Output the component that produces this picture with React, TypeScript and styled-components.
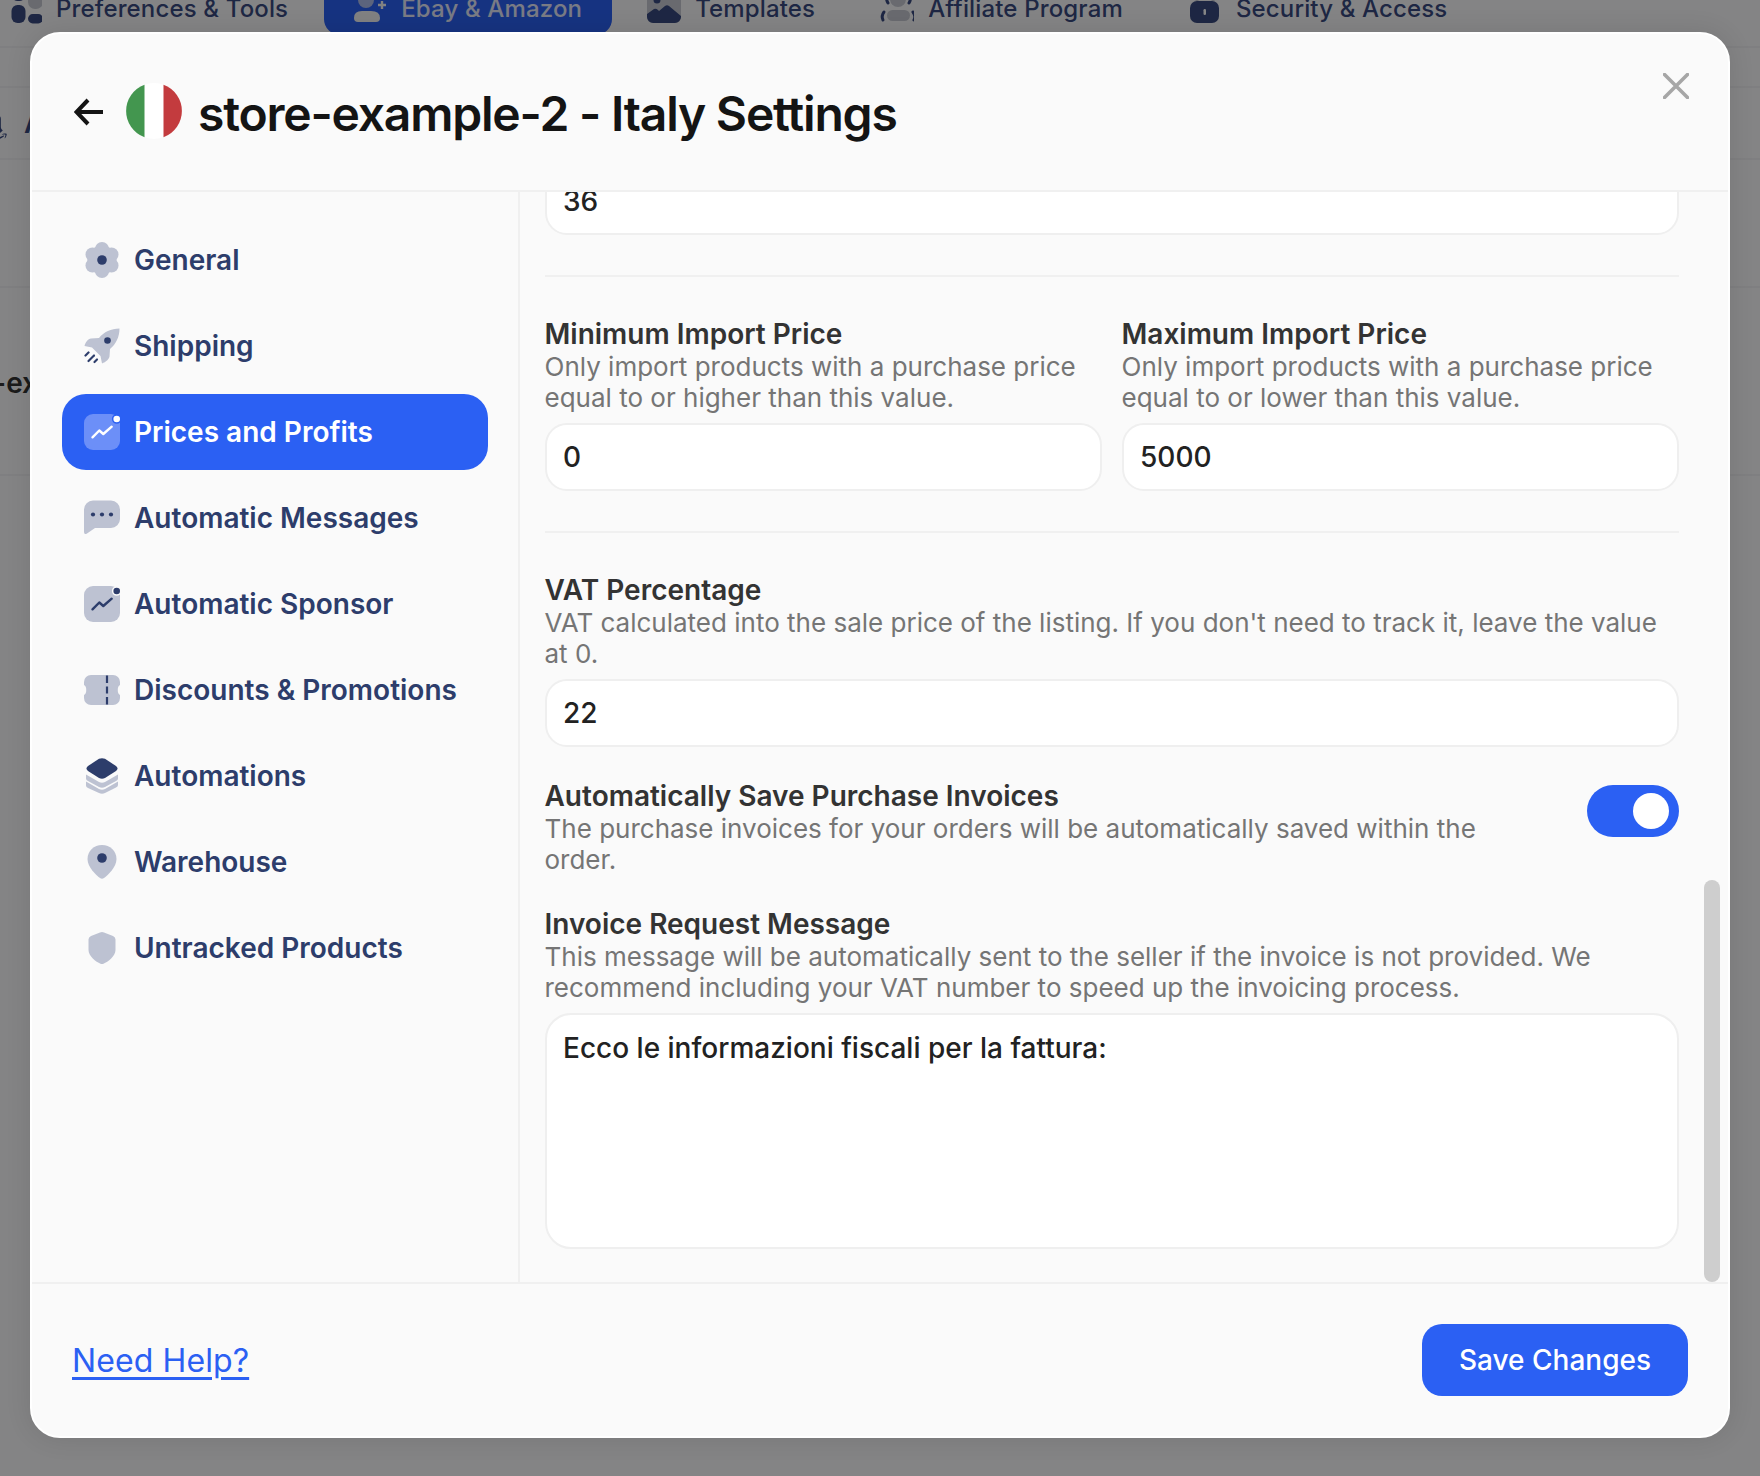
import React from "react";
import styled, { createGlobalStyle } from "styled-components";
import { FaAmazon } from "react-icons/fa";

const Global = createGlobalStyle`
  * { box-sizing: border-box; }
  html, body { margin: 0; padding: 0; background: #fafafc; }
  body { font-family: Inter, "Liberation Sans", sans-serif; }
  #root { width: 1760px; height: 1476px; overflow: hidden; }
`;

const Page = styled.div`
  position: relative;
  width: 1760px;
  height: 1476px;
  overflow: hidden;
  background: #fafafc;
`;

const TabBar = styled.div`
  display: flex;
  gap: 6px;
  height: 48px;
  margin-left: -21px;
  border-bottom: 2px solid #f0f0f3;
`;

const Tab = styled.div<{ $active?: boolean }>`
  display: flex;
  flex: none;
  align-items: center;
  gap: 14px;
  height: 54px;
  margin-top: -19px;
  padding: 0 30px 0 27px;
  border-radius: 16px;
  font-size: 24px;
  font-weight: 500;
  letter-spacing: 0.15px;
  white-space: nowrap;
  color: ${(p) => (p.$active ? "#e4e9fb" : "#3a4b80")};
  background: ${(p) => (p.$active ? "#2b60f3" : "transparent")};
`;

const BgRow = styled.div<{ $h: number; $shift?: number }>`
  display: flex;
  align-items: center;
  height: ${(p) => p.$h}px;
  padding-top: ${(p) => p.$shift ?? 0}px;
  border-bottom: 2px solid #f0f0f3;
  font-size: 28px;
  white-space: nowrap;
`;

const MarketIcon = styled(FaAmazon)`
  flex: none;
  width: 30px;
  height: 30px;
  margin-left: -21px;
  margin-top: 8px;
  color: #3a4b80;
`;

const MarketName = styled.span`
  margin-left: 15px;
  font-weight: 600;
  color: #3a4b80;
`;

const StoreName = styled.span`
  margin-left: -76px;
  font-weight: 600;
  color: #333;
`;

const Overlay = styled.div`
  position: absolute;
  inset: 0;
  background: rgba(0, 0, 0, 0.47);
`;

const Modal = styled.div`
  position: absolute;
  top: 32px;
  left: 30px;
  display: flex;
  flex-direction: column;
  width: 1700px;
  height: 1406px;
  overflow: hidden;
  border: 2px solid #fff;
  border-radius: 30px;
  background: #fafafa;
  box-shadow: 0 0 26px rgba(0, 0, 0, 0.1);
`;

const Header = styled.header`
  position: relative;
  display: flex;
  flex: none;
  align-items: center;
  gap: 16px;
  height: 158px;
  padding: 0 0 0 42px;
  border-bottom: 2px solid #f0f0f0;
`;

const BackIcon = styled.svg`
  flex: none;
  width: 30px;
  height: 28px;
  margin-right: 6px;
`;

const Flag = styled.svg`
  flex: none;
  width: 56px;
  height: 56px;
  margin-top: -2px;
`;

const Title = styled.h1`
  margin: 2px 0 0;
  font-size: 48px;
  font-weight: 600;
  letter-spacing: -1.2px;
  color: #141414;
  white-space: nowrap;
`;

const CloseIcon = styled.svg`
  position: absolute;
  top: 39px;
  right: 39px;
  width: 26px;
  height: 26px;
`;

const Body = styled.div`
  position: relative;
  display: flex;
  flex: 1;
  min-height: 0;
`;

const Sidebar = styled.nav`
  display: flex;
  flex: none;
  flex-direction: column;
  gap: 10px;
  width: 488px;
  padding: 30px 30px 0;
  border-right: 2px solid #f0f0f0;
`;

const NavRow = styled.div<{ $active?: boolean }>`
  --soft: ${(p) => (p.$active ? "#6c8ff8" : "#bdc2d2")};
  --strong: ${(p) => (p.$active ? "#ffffff" : "#2d3d6b")};
  --under: ${(p) => (p.$active ? "#2b60f3" : "#fafafa")};
  display: flex;
  flex: none;
  align-items: center;
  gap: 14px;
  height: 76px;
  padding-left: 22px;
  border-radius: 24px;
  font-size: 28px;
  font-weight: 600;
  color: ${(p) => (p.$active ? "#fff" : "#2d3d6b")};
  background: ${(p) => (p.$active ? "#2b60f3" : "transparent")};
`;

const Glyph = styled.svg`
  flex: none;
  width: 36px;
  height: 36px;
`;

const Content = styled.main`
  flex: 1;
  min-width: 0;
  overflow: hidden;
  padding: 0 49px 0 25px;
`;

const Scroller = styled.div`
  display: flex;
  flex-direction: column;
  margin-top: -25px;
`;

const Rule = styled.hr`
  flex: none;
  width: 100%;
  height: 2px;
  margin: 40px 0 39px;
  border: 0;
  background: #f0f0f0;
`;

const Columns = styled.div`
  display: grid;
  grid-template-columns: 1fr 1fr;
  gap: 20px;
`;

const Field = styled.div<{ $top?: number }>`
  display: flex;
  flex-direction: column;
  min-width: 0;
  margin-top: ${(p) => p.$top ?? 0}px;
`;

const Label = styled.div`
  margin-left: -0.5px;
  font-size: 28px;
  font-weight: 600;
  line-height: 36px;
  color: #333;
`;

const Hint = styled.div`
  margin: -1px 0 1px -0.5px;
  font-size: 26px;
  font-weight: 400;
  line-height: 31px;
  color: #757575;
`;

const Input = styled.input`
  display: block;
  width: 100%;
  height: 68px;
  margin-top: 9px;
  padding: 0 16px;
  border: 2px solid #efefef;
  border-radius: 22px;
  outline: 0;
  background: #fff;
  font-family: inherit;
  font-size: 28px;
  font-weight: 500;
  color: #222;
`;

const FirstInput = styled(Input)`
  margin-top: 0;
`;

const TextArea = styled.textarea`
  display: block;
  width: 100%;
  height: 236px;
  margin-top: 9px;
  padding: 15px 16px;
  border: 2px solid #efefef;
  border-radius: 26px;
  outline: 0;
  resize: none;
  background: #fff;
  font-family: inherit;
  font-size: 28px;
  font-weight: 500;
  line-height: 36px;
  color: #222;
`;

const ToggleRow = styled.div`
  display: flex;
  align-items: flex-start;
  justify-content: space-between;
  gap: 60px;
  margin-top: 31px;
`;

const ToggleText = styled.div`
  flex: 1;
  min-width: 0;
`;

const Toggle = styled.div`
  display: flex;
  flex: none;
  align-items: center;
  justify-content: flex-end;
  width: 92px;
  height: 52px;
  margin-top: 7px;
  padding-right: 10px;
  border-radius: 26px;
  background: #2b60f3;
`;

const Knob = styled.span`
  display: block;
  width: 36px;
  height: 36px;
  border-radius: 50%;
  background: #fff;
`;

const Thumb = styled.div`
  position: absolute;
  top: 688px;
  right: 8px;
  width: 16px;
  height: 402px;
  border-radius: 8px;
  background: #cecece;
`;

const Footer = styled.footer`
  display: flex;
  flex: none;
  align-items: center;
  justify-content: space-between;
  height: 154px;
  padding: 0 40px 0 40px;
  border-top: 2px solid #f0f0f0;
`;

const Help = styled.a`
  font-size: 32px;
  font-weight: 400;
  letter-spacing: 0.1px;
  color: #2b60f3;
  text-decoration: underline;
  text-underline-offset: 5px;
`;

const SaveButton = styled.button`
  width: 266px;
  height: 72px;
  border: 0;
  border-radius: 20px;
  background: #2b60f3;
  font-family: inherit;
  font-size: 28px;
  font-weight: 550;
  color: #fff;
`;

const Gear = () => (
  <Glyph viewBox="0 0 36 36">
    <g fill="var(--soft)">
      <circle cx="18" cy="18" r="14.500" />
      {[0, 60, 120, 180, 240, 300].map((a) => (
        <circle
          key={a}
          cx={18 + 11 * Math.sin((a * Math.PI) / 180)}
          cy={18 - 11 * Math.cos((a * Math.PI) / 180)}
          r="7"
        />
      ))}
    </g>
    <circle cx="18" cy="18" r="4.8" fill="var(--strong)" />
  </Glyph>
);

const Rocket = () => (
  <Glyph viewBox="0 0 36 36">
    <path
      fill="var(--soft)"
      d="M35.5.5C27 .5 20 4 15 10l-8 .5C4 11 1.5 14 .5 18L8 19.5 16.5 28 18 35.5c4-1.5 7-4.5 7.500-7L26 21c6-5 9.500-12 9.500-20.500Z"
    />
    <circle cx="23.500" cy="12.500" r="3.300" fill="var(--strong)" />
    <g stroke="var(--strong)" strokeWidth="2.200" strokeLinecap="round">
      <path d="M1.500 27.500 4.500 24.500" />
      <path d="M4.500 33 10 27.500" />
      <path d="M10.500 34 13 31.500" />
    </g>
  </Glyph>
);

const Chart = () => (
  <Glyph viewBox="0 0 36 36">
    <rect width="36" height="36" rx="9" fill="var(--soft)" />
    <circle cx="32.700" cy="5" r="4.800" fill="var(--under)" />
    <circle cx="32.700" cy="5" r="3.300" fill="var(--strong)" />
    <path
      d="M8.500 23.300 15.300 16.500l4 3.500 8.400-7.300"
      fill="none"
      stroke="var(--strong)"
      strokeWidth="2.400"
      strokeLinecap="round"
      strokeLinejoin="round"
    />
  </Glyph>
);

const Bubble = () => (
  <Glyph viewBox="0 0 36 36">
    <path
      fill="var(--soft)"
      d="M9 .500H27a9 9 0 0 1 9 9V19a9 9 0 0 1-9 9H11l-8 5.500Q0 35 0 32V9.500a9 9 0 0 1 9-9Z"
    />
    <g fill="var(--strong)">
      <circle cx="9" cy="14.500" r="2.100" />
      <circle cx="18" cy="14.500" r="2.100" />
      <circle cx="27" cy="14.500" r="2.100" />
    </g>
  </Glyph>
);

const Ticket = () => (
  <Glyph viewBox="0 0 36 36">
    <path
      fill="var(--soft)"
      d="M7 3H29a7 7 0 0 1 7 7v3c-3 1-3 9 0 10v3a7 7 0 0 1-7 7H7a7 7 0 0 1-7-7V23c3-1 3-9 0-10V10a7 7 0 0 1 7-7Z"
    />
    <path
      d="M23 3.500V11M23 14.500V21.500M23 25V32.500"
      stroke="var(--strong)"
      strokeWidth="2.200"
      fill="none"
    />
  </Glyph>
);

const Layers = () => (
  <Glyph viewBox="0 0 36 36">
    <path
      fill="var(--soft)"
      d="M2 16.500 15 24q3 1.500 6 0l13-7.500v4q0 1.500-2 2.500l-11 6q-3 1.500-6 0L4 23q-2-1-2-2.500Z"
    />
    <path
      fill="var(--soft)"
      d="M2 23.500 15 31q3 1.500 6 0l13-7.500v3.500q0 1.500-2 2.500l-11 5.500q-3 1.500-6 0L4 30q-2-1-2-2.500Z"
    />
    <path
      fill="var(--strong)"
      d="M15 .800q3-1.200 6 0L32 8q3 2.500 0 5L21 20q-3 1.500-6 0L4 13Q1 10.500 4 8Z"
    />
  </Glyph>
);

const Pin = () => (
  <Glyph viewBox="0 0 36 36">
    <path
      fill="var(--soft)"
      d="M18 1c8 0 14.500 6 14.500 14 0 8-8.500 16-12.500 19q-2 1.500-4 0C12 31 3.500 23 3.500 15 3.500 7 10 1 18 1Z"
    />
    <circle cx="18" cy="14" r="4.800" fill="var(--strong)" />
  </Glyph>
);

const Shield = () => (
  <Glyph viewBox="0 0 36 36">
    <path
      fill="var(--soft)"
      d="M16 2.500q2-1 4 0l9 3.500q2.500 1 2.500 3.500V20c0 6-7.500 12-12 13.700q-1.500.5-3 0C12 32 4.500 26 4.500 20V9.500Q4.500 7 7 6Z"
    />
  </Glyph>
);

const nav = [
  { label: "General", icon: <Gear /> },
  { label: "Shipping", icon: <Rocket /> },
  { label: "Prices and Profits", icon: <Chart />, active: true },
  { label: "Automatic Messages", icon: <Bubble /> },
  { label: "Automatic Sponsor", icon: <Chart /> },
  { label: "Discounts & Promotions", icon: <Ticket /> },
  { label: "Automations", icon: <Layers /> },
  { label: "Warehouse", icon: <Pin /> },
  { label: "Untracked Products", icon: <Shield /> },
];

const DARK = "#3a4b80";
const MID = "#c6c9d2";

const TabPrefs = () => (
  <Glyph viewBox="0 0 36 36">
    <rect x="22" y="-4" width="15" height="23" rx="7" fill={MID} />
    <rect x="5.500" y="-6" width="14" height="17" rx="6" fill={DARK} />
    <rect x="5.500" y="15" width="14" height="18" rx="6" fill={DARK} />
    <rect x="22" y="24" width="15" height="9.500" rx="4.700" fill={DARK} />
  </Glyph>
);

const TabPerson = () => (
  <Glyph viewBox="0 0 36 36">
    <circle cx="15" cy="10" r="8" fill="#aebdec" />
    <path d="M3 28q0-7 8-7h9q9 0 9 7 0 4-4 4H7q-4 0-4-4Z" fill="#f4f4f6" />
    <path d="M31 11v8M27 15h8" stroke="#f4f4f6" strokeWidth="2.400" />
  </Glyph>
);

const TabImage = () => (
  <Glyph viewBox="0 0 36 36">
    <rect x="2" y="-6" width="34" height="39" rx="7" fill={MID} />
    <circle cx="12" cy="10" r="3.500" fill={DARK} />
    <path
      d="M2 24l7-5q2-1 4 1l1 1 6-5q2-1.500 4 0l12 10v1a6 6 0 0 1-6 6H8a6 6 0 0 1-6-6Z"
      fill={DARK}
    />
  </Glyph>
);

const TabPeople = () => (
  <Glyph viewBox="0 0 36 36">
    <circle cx="20" cy="9" r="8" fill={MID} />
    <rect x="9" y="20" width="23" height="11" rx="5.500" fill={MID} />
    <g fill="none" stroke={DARK} strokeWidth="3" strokeLinecap="round">
      <path d="M5 30Q3 26 6 22" />
      <path d="M36 30Q38 26 35 22" />
      <path d="M10 3Q7 8 10 13" />
      <path d="M31 3Q34 8 31 13" />
    </g>
  </Glyph>
);

const TabLock = () => (
  <Glyph viewBox="0 0 36 36">
    <path d="M11 11V7a8 8 0 0 1 16 0v4" fill="none" stroke={MID} strokeWidth="3" />
    <rect x="4" y="11" width="29" height="22" rx="7" fill={DARK} />
    <rect x="17.500" y="19" width="2.500" height="6" rx="1.200" fill="#fff" />
  </Glyph>
);

export default function App() {
  return (
    <Page>
      <Global />
      <TabBar>
        <Tab>
          <TabPrefs />
          Preferences &amp; Tools
        </Tab>
        <Tab $active>
          <TabPerson />
          Ebay &amp; Amazon
        </Tab>
        <Tab>
          <TabImage />
          Templates
        </Tab>
        <Tab>
          <TabPeople />
          Affiliate Program
        </Tab>
        <Tab>
          <TabLock />
          Security &amp; Access
        </Tab>
      </TabBar>
      <BgRow $h={40} />
      <BgRow $h={72}>
        <MarketIcon />
        <MarketName>Amazon</MarketName>
      </BgRow>
      <BgRow $h={128} />
      <BgRow $h={188} $shift={3}>
        <StoreName>store-example-2</StoreName>
      </BgRow>
      <Overlay />
      <Modal>
        <Header>
          <BackIcon viewBox="0 0 30 28">
            <path
              d="M29 14H3M14 2 2.500 14 14 26"
              fill="none"
              stroke="#141414"
              strokeWidth="4"
            />
          </BackIcon>
          <Flag viewBox="0 0 56 56">
            <circle cx="28" cy="28" r="28" fill="#fff" />
            <path d="M18.500 1.700A28 28 0 0 0 18.500 54.300Z" fill="#43964f" />
            <path d="M37.500 1.700A28 28 0 0 1 37.500 54.300Z" fill="#c33b3e" />
          </Flag>
          <Title>store-example-2 - Italy Settings</Title>
          <CloseIcon viewBox="0 0 26 26">
            <path
              d="M1.500 1.500 24.500 24.500M24.500 1.500 1.500 24.500"
              stroke="#a6a6a6"
              strokeWidth="3.600"
              strokeLinecap="round"
            />
          </CloseIcon>
        </Header>
        <Body>
          <Sidebar>
            {nav.map((n) => (
              <NavRow key={n.label} $active={n.active}>
                {n.icon}
                {n.label}
              </NavRow>
            ))}
          </Sidebar>
          <Content>
            <Scroller>
              <FirstInput readOnly value="36" />
              <Rule />
              <Columns>
                <Field>
                  <Label>Minimum Import Price</Label>
                  <Hint>
                    Only import products with a purchase price equal to or higher than this value.
                  </Hint>
                  <Input readOnly value="0" />
                </Field>
                <Field>
                  <Label>Maximum Import Price</Label>
                  <Hint>
                    Only import products with a purchase price equal to or lower than this value.
                  </Hint>
                  <Input readOnly value="5000" />
                </Field>
              </Columns>
              <Rule />
              <Field>
                <Label>VAT Percentage</Label>
                <Hint>
                  VAT calculated into the sale price of the listing. If you don't need to track it,
                  leave the value at 0.
                </Hint>
                <Input readOnly value="22" />
              </Field>
              <ToggleRow>
                <ToggleText>
                  <Label>Automatically Save Purchase Invoices</Label>
                  <Hint>
                    The purchase invoices for your orders will be automatically saved within the
                    order.
                  </Hint>
                </ToggleText>
                <Toggle>
                  <Knob />
                </Toggle>
              </ToggleRow>
              <Field $top={30}>
                <Label>Invoice Request Message</Label>
                <Hint>
                  This message will be automatically sent to the seller if the invoice is not
                  provided. We recommend including your VAT number to speed up the invoicing
                  process.
                </Hint>
                <TextArea readOnly value="Ecco le informazioni fiscali per la fattura:" />
              </Field>
            </Scroller>
          </Content>
          <Thumb />
        </Body>
        <Footer>
          <Help href="#">Need Help?</Help>
          <SaveButton>Save Changes</SaveButton>
        </Footer>
      </Modal>
    </Page>
  );
}
